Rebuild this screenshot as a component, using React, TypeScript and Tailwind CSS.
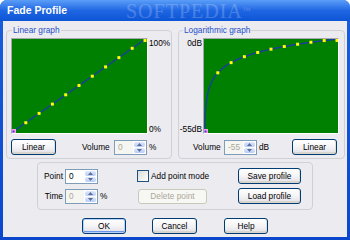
import React from 'react';

const W = 134;
const H = 94;

function Graph({ kind }: { kind: 'lin' | 'log' }) {
  const fmin = Math.pow(10, -55 / 20);
  const toY = (f: number) => {
    if (kind === 'lin') return H - 1 - f * (H - 1);
    const db = 20 * Math.log10(Math.max(f, fmin));
    return ((-db) / 55) * (H - 1);
  };
  const toX = (f: number) => f * (W - 1) + 0.5;

  let d = '';
  if (kind === 'lin') {
    d = `M${toX(0)} ${toY(0)} L${toX(1)} ${toY(1)}`;
  } else {
    const pts: string[] = [];
    for (let k = 0; k <= 200; k++) {
      const f = fmin * Math.pow(1 / fmin, k / 200);
      pts.push(`${toX(f).toFixed(2)} ${toY(f).toFixed(2)}`);
    }
    d = `M${toX(0)} ${H - 1} L` + pts.join(' L');
  }

  const points = Array.from({ length: 10 }, (_, i) => (i + 1) / 10);

  return (
    <div className="h-[96px] border border-t-[#a7a7ae] border-l-[#a7a7ae] border-b-white border-r-white bg-[#008000]">
      <svg width={kind === 'lin' ? 135 : 134} height={H} className="block">
        <path d={d} fill="none" stroke="#1b3d9f" strokeWidth="1.4" />
        {points.map((f) => (
          <rect key={f} x={Math.min(toX(f) - 1.5, W - 2.5)} y={Math.max(toY(f) - 1.5, 0)} width="3" height="3" fill="#ffff00" />
        ))}
        <rect x="0" y={H - 4} width="4" height="4" fill="#ff9cf5" />
        <rect x="0.5" y={H - 2.5} width="2" height="2" fill="#3a46c8" />
      </svg>
    </div>
  );
}

function Arrow({ up }: { up: boolean }) {
  return (
    <svg width="5" height="3" className="block">
      <path d={up ? 'M0 3 L2.5 0 L5 3 Z' : 'M0 0 L2.5 3 L5 0 Z'} fill="#5a6e93" />
    </svg>
  );
}

function Spin({ value, disabled = false, className = '' }: { value: string; disabled?: boolean; className?: string }) {
  return (
    <div className={`flex h-[15px] w-[33px] border border-[#7f9db9] bg-white ${className}`}>
      <div
        className={`w-[18px] pl-[3px] text-[8.3px] leading-[13px] ${disabled ? 'bg-[#f5f5f2] text-[#aca899]' : 'bg-white text-black'}`}
      >
        {value}
      </div>
      <div className="flex w-[13px] flex-col gap-px p-px">
        <div className="flex flex-1 items-center justify-center rounded-[2px] bg-linear-to-b from-[#dfe8fc] to-[#b8ccf6]">
          <Arrow up />
        </div>
        <div className="flex flex-1 items-center justify-center rounded-[2px] bg-linear-to-b from-[#dfe8fc] to-[#b8ccf6]">
          <Arrow up={false} />
        </div>
      </div>
    </div>
  );
}

function XpButton({
  label,
  className = '',
  primary = false,
  disabled = false,
}: {
  label: string;
  className?: string;
  primary?: boolean;
  disabled?: boolean;
}) {
  if (disabled) {
    return (
      <div
        className={`flex items-center justify-center rounded-[3px] border border-[#cac8bb] bg-[#f7f7f4] text-[8.3px] text-[#aca899] ${className}`}
      >
        {label}
      </div>
    );
  }
  return (
    <div
      className={`flex items-center justify-center rounded-[3px] border border-[#003c74] bg-linear-to-b from-white via-[#f4f4f6] to-[#e0dfe6] text-[8.3px] text-black ${
        primary
          ? 'shadow-[inset_0_0_0_1px_#b9d0f7,inset_0_-1px_0_1px_#6b95e6]'
          : 'shadow-[inset_0_-2px_0_#d8d5cf,inset_-1px_0_0_#e2e0da]'
      } ${className}`}
    >
      {label}
    </div>
  );
}

export default function App() {
  return (
    <div className="relative flex h-[240px] w-[350px] flex-col overflow-hidden rounded-t-[7px] bg-linear-to-b from-[#1a5fe0] to-[#0a47cc] font-['Liberation_Sans',Arial,sans-serif] text-black">
      <div className="flex h-[21px] items-center bg-linear-to-b from-[#5b9df8] via-[#1f66e3] to-[#0c55d5] pl-[7px] text-[10.5px] font-bold text-white">
        Fade Profile
      </div>

      <div className="mx-[3px] mb-[3px] flex flex-1 flex-col bg-[#ecebf0]">
        <div className="mt-[3px] flex gap-[6px] pl-[3px]">
          <fieldset className="h-[135px] w-[166px] rounded-[4px] border border-[#d0d0d7]">
            <legend className="ml-[5px] px-[1px] text-[8.3px] leading-[13px] text-[#1f4fc8]">Linear graph</legend>
            <div className="flex pl-[4px] pt-[1px]">
              <div className="w-[137px]">
                <Graph kind="lin" />
              </div>
              <div className="ml-[1px] flex flex-col justify-between text-[8.3px] leading-[10px]">
                <span>100%</span>
                <span>0%</span>
              </div>
            </div>
            <div className="mt-[5px] flex items-center pl-[4px] text-[8.3px]">
              <XpButton label="Linear" className="h-[16px] w-[45px]" />
              <span className="ml-[26px] w-[32px]">Volume</span>
              <Spin value="0" disabled />
              <span className="ml-[2px]">%</span>
            </div>
          </fieldset>

          <fieldset className="h-[135px] w-[167px] rounded-[4px] border border-[#d0d0d7]">
            <legend className="ml-[4px] px-[1px] text-[8.3px] leading-[13px] text-[#1f4fc8]">Logarithmic graph</legend>
            <div className="flex pt-[1px]">
              <div className="flex w-[24px] flex-col items-end justify-between pr-[1px] text-[8.3px] leading-[10px]">
                <span>0dB</span>
                <span>-55dB</span>
              </div>
              <div className="w-[136px]">
                <Graph kind="log" />
              </div>
            </div>
            <div className="mt-[5px] flex items-center text-[8.3px]">
              <span className="ml-[14px] w-[30px]">Volume</span>
              <Spin value="-55" disabled className="ml-[1px]" />
              <span className="ml-[2px]">dB</span>
              <XpButton label="Linear" className="ml-auto mr-[7px] h-[16px] w-[45px]" />
            </div>
          </fieldset>
        </div>

        <div className="ml-[34px] mt-[3px] flex h-[48px] w-[276px] rounded-[4px] border border-[#d0d0d7] pt-[5px] text-[8.3px]">
          <div className="flex w-[99px] flex-col gap-[4px]">
            <div className="flex h-[16px] items-center">
              <span className="w-[25px] text-right">Point</span>
              <Spin value="0" className="ml-[2px]" />
            </div>
            <div className="flex h-[16px] items-center">
              <span className="w-[25px] text-right">Time</span>
              <Spin value="0" disabled className="ml-[2px]" />
              <span className="ml-[2px]">%</span>
            </div>
          </div>
          <div className="flex w-[101px] flex-col gap-[4px]">
            <div className="flex h-[16px] items-center">
              <div className="h-[12px] w-[12px] border border-[#1c5180] bg-linear-to-br from-[#dcdcd7] to-white" />
              <span className="ml-[2px]">Add point mode</span>
            </div>
            <div className="flex h-[16px] items-center">
              <XpButton label="Delete point" disabled className="ml-[1px] h-[15px] w-[69px]" />
            </div>
          </div>
          <div className="flex flex-col gap-[4px]">
            <XpButton label="Save profile" className="h-[16px] w-[63px]" />
            <XpButton label="Load profile" className="h-[16px] w-[63px]" />
          </div>
        </div>

        <div className="mt-[8px] flex">
          <XpButton label="OK" primary className="ml-[79px] h-[16px] w-[44px]" />
          <XpButton label="Cancel" className="ml-[26px] h-[16px] w-[45px]" />
          <XpButton label="Help" className="ml-[27px] h-[16px] w-[44px]" />
        </div>
      </div>

      <div className="pointer-events-none absolute left-[126px] top-[-1px] font-['Liberation_Serif',serif] text-[20px] leading-[24px] tracking-[1px] text-white opacity-20">
        SOFTPEDIA<span className="align-top text-[8px]">™</span>
      </div>
    </div>
  );
}
